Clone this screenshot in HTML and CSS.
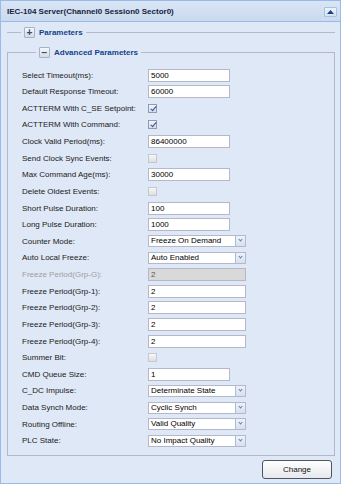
FILE: index.html
```html
<!DOCTYPE html>
<html lang="en">
<head>
    <meta charset="UTF-8">
    <meta name="viewport" content="width=device-width, initial-scale=1.0">
    <title>IEC-104 Server</title>
    <link rel="stylesheet" href="styles.css">
</head>
<body>

<div class="panel">
    <div class="panel-header">
        <span class="panel-title">IEC-104 Server(Channel0 Session0 Sector0)</span>
        <span class="tool-btn">
            <svg width="7" height="4" viewBox="0 0 7 4"><polygon points="0,4 3.5,0 7,4" fill="#15428b"/></svg>
        </span>
    </div>

    <div class="panel-body">
        <fieldset class="fs collapsed">
            <legend><span class="toggle">+</span>Parameters</legend>
        </fieldset>

        <fieldset class="fs">
            <legend><span class="toggle">&minus;</span>Advanced Parameters</legend>

            <div class="row"><label>Select Timeout(ms):</label><input class="txt" type="text" value="5000"></div>
            <div class="row"><label>Default Response Timeout:</label><input class="txt" type="text" value="60000"></div>
            <div class="row"><label>ACTTERM With C_SE Setpoint:</label><span class="chk checked"></span></div>
            <div class="row"><label>ACTTERM With Command:</label><span class="chk checked"></span></div>
            <div class="row"><label>Clock Valid Period(ms):</label><input class="txt" type="text" value="86400000"></div>
            <div class="row"><label>Send Clock Sync Events:</label><span class="chk"></span></div>
            <div class="row"><label>Max Command Age(ms):</label><input class="txt" type="text" value="30000"></div>
            <div class="row"><label>Delete Oldest Events:</label><span class="chk"></span></div>
            <div class="row"><label>Short Pulse Duration:</label><input class="txt" type="text" value="100"></div>
            <div class="row"><label>Long Pulse Duration:</label><input class="txt" type="text" value="1000"></div>
            <div class="row"><label>Counter Mode:</label><div class="combo"><span class="combo-val">Freeze On Demand</span><span class="trigger"></span></div></div>
            <div class="row"><label>Auto Local Freeze:</label><div class="combo"><span class="combo-val">Auto Enabled</span><span class="trigger"></span></div></div>
            <div class="row disabled"><label>Freeze Period(Grp-G):</label><input class="txt wide" type="text" value="2" disabled></div>
            <div class="row"><label>Freeze Period(Grp-1):</label><input class="txt wide" type="text" value="2"></div>
            <div class="row"><label>Freeze Period(Grp-2):</label><input class="txt wide" type="text" value="2"></div>
            <div class="row"><label>Freeze Period(Grp-3):</label><input class="txt wide" type="text" value="2"></div>
            <div class="row"><label>Freeze Period(Grp-4):</label><input class="txt wide" type="text" value="2"></div>
            <div class="row"><label>Summer Bit:</label><span class="chk"></span></div>
            <div class="row"><label>CMD Queue Size:</label><input class="txt" type="text" value="1"></div>
            <div class="row"><label>C_DC Impulse:</label><div class="combo"><span class="combo-val">Determinate State</span><span class="trigger"></span></div></div>
            <div class="row"><label>Data Synch Mode:</label><div class="combo"><span class="combo-val">Cyclic Synch</span><span class="trigger"></span></div></div>
            <div class="row"><label>Routing Offline:</label><div class="combo"><span class="combo-val">Valid Quality</span><span class="trigger"></span></div></div>
            <div class="row"><label>PLC State:</label><div class="combo"><span class="combo-val">No Impact Quality</span><span class="trigger"></span></div></div>
        </fieldset>

        <div class="footer">
            <button class="btn" type="button">Change</button>
        </div>
    </div>
</div>

</body>
</html>
```

FILE: styles.css
```css
* {
    margin: 0;
    padding: 0;
    box-sizing: border-box;
    font-family: "Liberation Sans", Arial, sans-serif;
}

body {
    background: #fff;
}

.panel {
    width: 341px;
    height: 484px;
    border: 1px solid #99bbe8;
    background: #dfe8f6;
    display: flex;
    flex-direction: column;
}

.panel-header {
    height: 21px;
    display: flex;
    align-items: center;
    justify-content: space-between;
    padding: 0 3px 0 6px;
    background: linear-gradient(#dae6f5, #cad9ee);
    border-bottom: 1px solid #99bbe8;
}

.panel-title {
    font-size: 8px;
    font-weight: bold;
    color: #15233c;
}

.tool-btn {
    width: 13px;
    height: 10px;
    display: flex;
    align-items: center;
    justify-content: center;
    background: linear-gradient(#eef3fa, #d4e0f0);
    border: 1px solid #a9c0e0;
    border-radius: 1px;
    margin-top: 1px;
}

.panel-body {
    flex: 1;
    padding: 5px 5px 0 6px;
    display: flex;
    flex-direction: column;
}

/* fieldsets */
.fs {
    border: 1px solid #b5b8c8;
    padding: 8.7px 0 5.7px 14px;
}

.fs.collapsed {
    border-left: none;
    border-right: none;
    border-bottom: none;
    padding: 0;
    margin-bottom: 9px;
}

.fs legend {
    margin-left: 14px;
    padding: 0 3px;
    height: 11px;
    display: flex;
    align-items: center;
    font-size: 8px;
    font-weight: bold;
    color: #15428b;
}

.toggle {
    width: 11px;
    height: 11px;
    margin-right: 4px;
    border: 1px solid #a6b3c6;
    border-radius: 1px;
    background: linear-gradient(#f4f7fb, #d3dce8);
    color: #3a4a66;
    font-size: 10px;
    line-height: 9px;
    text-align: center;
}

/* form rows */
.row {
    height: 16.636px;
    display: flex;
    align-items: center;
}

.row label {
    width: 126px;
    font-size: 8px;
    color: #1a1a1a;
}

.row.disabled label {
    color: #a0a0a0;
}

.txt {
    width: 82px;
    height: 13px;
    border: 1px solid #b5b8c8;
    background: #fff;
    padding: 0 2px;
    font-size: 8px;
    color: #000;
    outline: none;
}

.txt.wide {
    width: 98px;
}

.txt:disabled {
    background: #d9d9d9;
    color: #555;
}

.chk {
    width: 9px;
    height: 9px;
    border: 1px solid #c4c8d0;
    background: linear-gradient(#f7f7f7, #dedede);
    position: relative;
}

.chk.checked {
    border-color: #8e9bb0;
    background: linear-gradient(#f2f4f8, #d7dce6);
}

.chk.checked::after {
    content: "";
    position: absolute;
    left: 2.5px;
    top: 0px;
    width: 2px;
    height: 5px;
    border-right: 1.5px solid #2d55a8;
    border-bottom: 1.5px solid #2d55a8;
    transform: rotate(40deg);
}

.combo {
    width: 98px;
    height: 12px;
    display: flex;
    border: 1px solid #b5b8c8;
    background: #fff;
}

.combo-val {
    flex: 1;
    padding: 0 2px;
    font-size: 8px;
    line-height: 10px;
    color: #000;
}

.trigger {
    width: 10px;
    border-left: 1px solid #a9bcd8;
    background: linear-gradient(#eef3fa, #d6e1f0);
    position: relative;
}

.trigger::after {
    content: "";
    position: absolute;
    left: 3px;
    top: 2px;
    width: 2px;
    height: 2px;
    border-right: 1px solid #6b7f9e;
    border-bottom: 1px solid #6b7f9e;
    transform: rotate(45deg);
}

/* footer */
.footer {
    display: flex;
    justify-content: flex-end;
    padding: 4px 3px 0 0;
}

.btn {
    width: 70px;
    height: 19px;
    border: 1px solid #4d5563;
    border-radius: 3px;
    background: linear-gradient(#ffffff, #e6e8ec);
    font-size: 8px;
    color: #111;
    cursor: pointer;
}
```
